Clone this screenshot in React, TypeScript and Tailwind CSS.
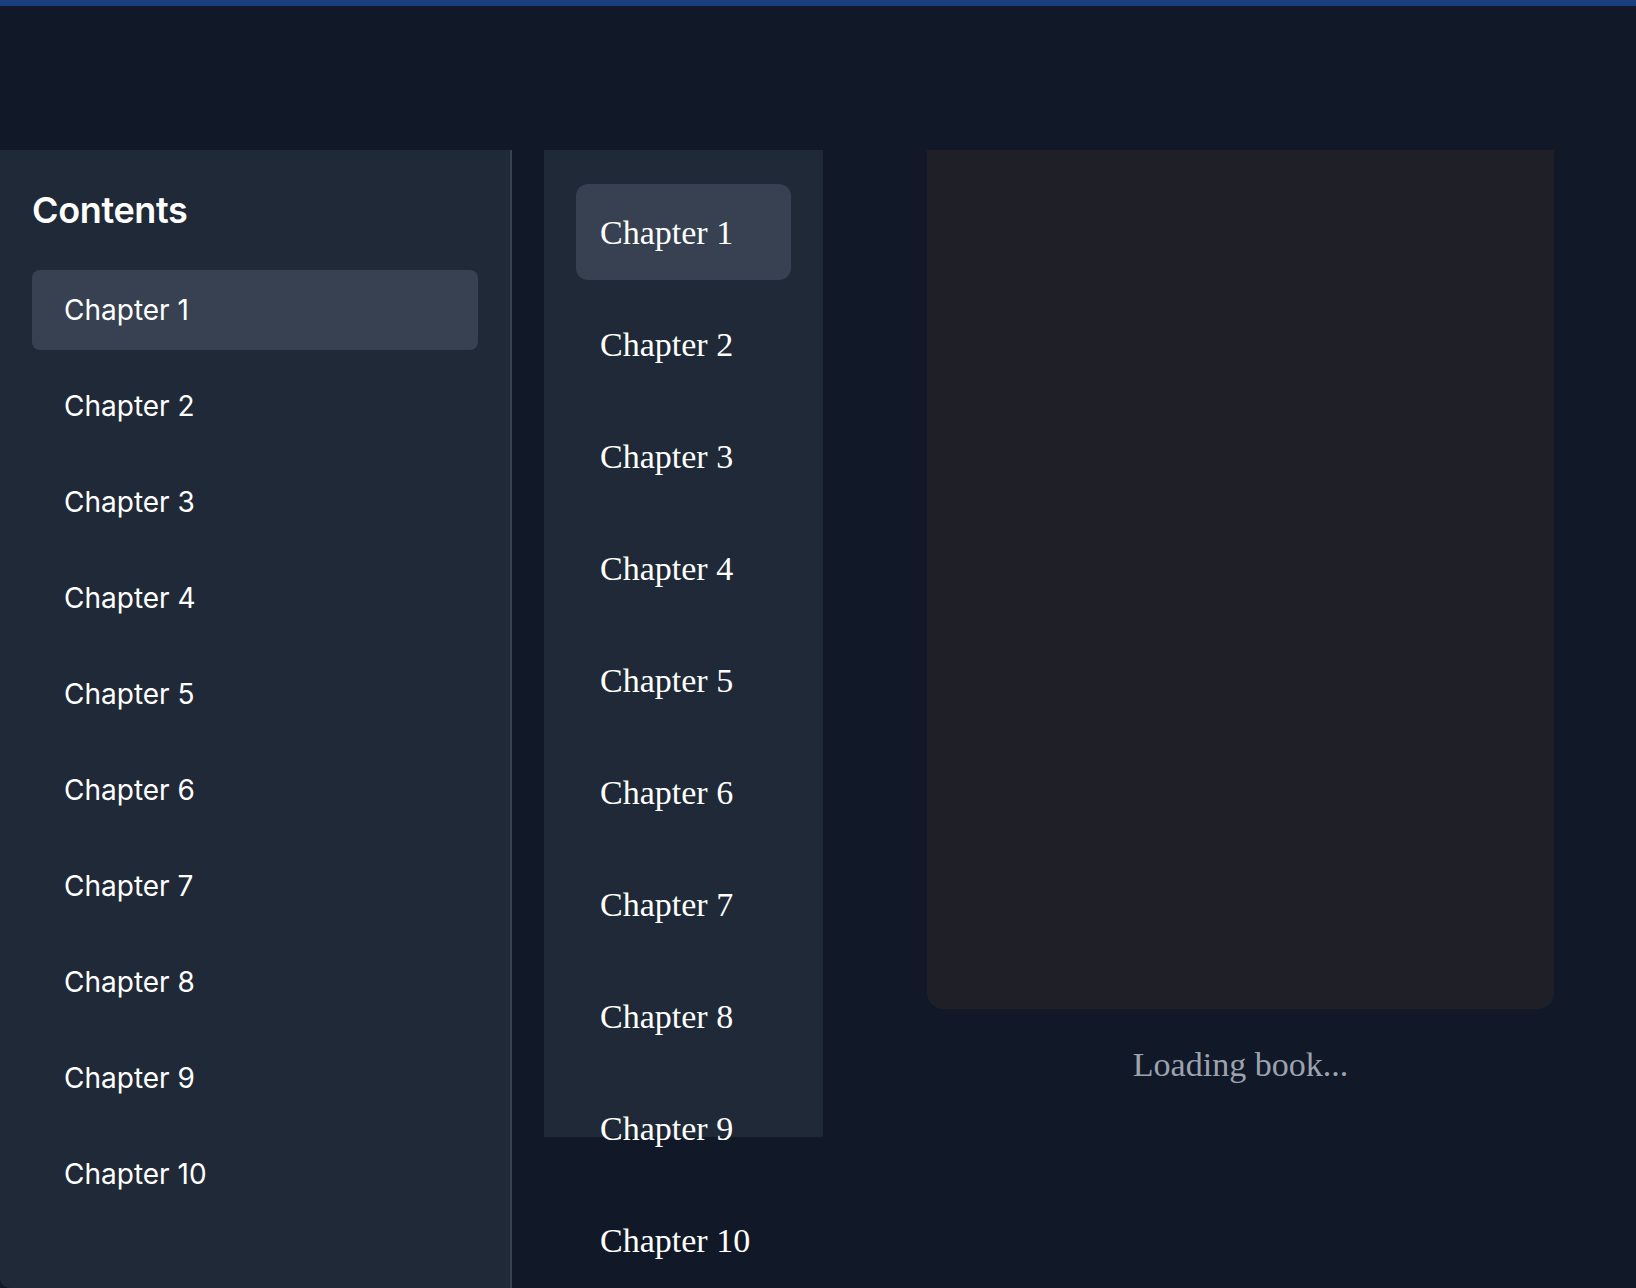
import React from "react";

const chapters = Array.from({ length: 10 }, (_, i) => `Chapter ${i + 1}`);

export default function App() {
  return (
    <div className="min-h-screen bg-[#111827] flex flex-col" style={{}}>
      <div className="h-[6px] bg-[#1a3e7e]" />
      <div className="h-[144px] bg-[#111827]" />
      <div className="flex flex-1 items-start">
        <aside className="w-[512px] self-stretch min-h-[1138px] bg-[#1f2937] border-r-2 border-[#374151] rounded-bl-[10px] p-8 font-['Inter','Noto_Sans',sans-serif] text-white">
          <h2 className="h-[56px] flex items-center text-[36px] font-semibold leading-none mb-8 tracking-[-0.01em]">
            Contents
          </h2>
          <ul className="flex flex-col gap-4">
            {chapters.map((c, i) => (
              <li
                key={c}
                className={`h-20 flex items-center px-8 rounded-lg text-[28px] ${
                  i === 0 ? "bg-[#374151]" : ""
                }`}
              >
                {c}
              </li>
            ))}
          </ul>
        </aside>
        <nav className="ml-8 w-[279px] h-[987px] bg-[#1f2937] px-8 pt-[34px] font-['Liberation_Serif',serif] text-white">
          <ul className="flex flex-col gap-4">
            {chapters.map((c, i) => (
              <li
                key={c}
                className={`h-24 flex items-center px-6 rounded-xl text-[34px] ${
                  i === 0 ? "bg-[#374151]" : ""
                }`}
              >
                {c}
              </li>
            ))}
          </ul>
        </nav>
        <section className="ml-[104px] w-[627px] flex flex-col items-center">
          <div className="w-full h-[859px] bg-[#1f2027] rounded-b-2xl" />
          <p className="mt-9 leading-[40px] text-[34px] text-[#9ca3af] font-['Liberation_Serif',serif]">
            Loading book...
          </p>
        </section>
      </div>
    </div>
  );
}
